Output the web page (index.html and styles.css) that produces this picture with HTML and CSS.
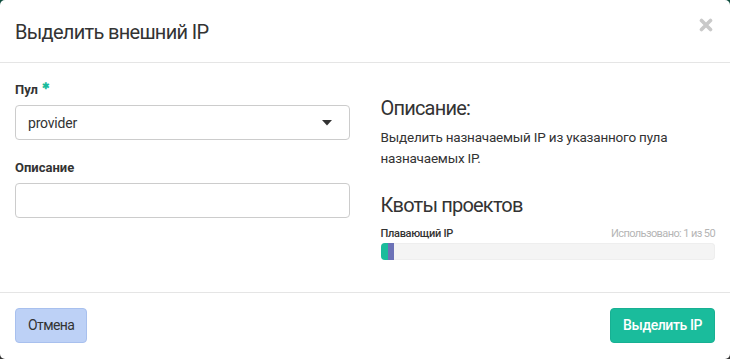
FILE: index.html
```html
<!DOCTYPE html>
<html lang="ru">
<head>
<meta charset="utf-8">
<title>Выделить внешний IP</title>
<link rel="stylesheet" href="styles.css">
</head>
<body>
<div class="modal">
  <div class="modal-header">
    <h4 class="modal-title">Выделить внешний IP</h4>
    <button class="close" type="button" aria-label="Закрыть">
      <svg width="14" height="14" viewBox="0 0 14 14"><path d="M2.5 2.5 L11.5 11.5 M11.5 2.5 L2.5 11.5" stroke="#c9c9c9" stroke-width="3.6" stroke-linecap="round"/></svg>
    </button>
  </div>
  <div class="modal-body">
    <div class="col">
      <div class="form-group">
        <label class="label">Пул <span class="req">✱</span></label>
        <div class="select">
          <span>provider</span>
          <svg class="caret" width="10" height="6" viewBox="0 0 10 6"><path d="M0 0 L10 0 L5 5.5 Z" fill="#333"/></svg>
        </div>
      </div>
      <div class="form-group">
        <label class="label">Описание</label>
        <div class="input"></div>
      </div>
    </div>
    <div class="col">
      <h3 class="heading">Описание:</h3>
      <p class="text">Выделить назначаемый IP из указанного пула назначаемых IP.</p>
      <h3 class="heading quota-title">Квоты проектов</h3>
      <div class="quota-row">
        <span class="quota-name">Плавающий IP</span>
        <span class="quota-used">Использовано: 1 из 50</span>
      </div>
      <div class="bar">
        <div class="seg seg-teal"></div>
        <div class="seg seg-purple"></div>
      </div>
    </div>
  </div>
  <div class="modal-footer">
    <button class="btn btn-cancel" type="button">Отмена</button>
    <button class="btn btn-primary" type="button">Выделить IP</button>
  </div>
</div>
</body>
</html>
```

FILE: styles.css
```css
* { box-sizing: border-box; }
html, body { margin: 0; height: 100%; }
body {
  background: linear-gradient(#0f4d3e, #333 60%);
  font-family: Roboto, "Liberation Sans", sans-serif;
  color: #333;
}
.modal {
  height: 100vh;
  background: #fff;
  border-radius: 5px;
  display: flex;
  flex-direction: column;
}
.modal-header {
  display: flex;
  justify-content: space-between;
  align-items: flex-start;
  padding: 18px 15px 16px 15px;
  border-bottom: 1px solid #e5e5e5;
}
.modal-title {
  margin: 0;
  font-size: 20px;
  font-weight: 400;
  line-height: 28px;
  letter-spacing: -0.7px;
  color: #333;
}
.close {
  border: 0;
  background: none;
  padding: 0;
  margin: 0 2px 0 0;
  width: 14px;
  height: 14px;
  display: block;
}
.close svg { display: block; }
.modal-body {
  flex: 1;
  display: grid;
  grid-template-columns: 1fr 1fr;
  column-gap: 31px;
  padding: 16px 15px 15px 15px;
  align-items: start;
}
.form-group { margin-bottom: 17px; }
.label {
  display: block;
  font-size: 13px;
  font-weight: 700;
  line-height: 21px;
  height: 21px;
  margin-bottom: 5px;
}
.req {
  color: #1abc9c;
  font-size: 9px;
  line-height: 0;
  vertical-align: 5px;
  margin-left: 1px;
}
.select, .input {
  height: 35px;
  border: 1px solid #cccccc;
  border-radius: 4px;
  background: #fff;
}
.select {
  display: flex;
  align-items: center;
  justify-content: space-between;
  padding: 0 17px 0 12px;
  font-size: 14px;
  letter-spacing: -0.2px;
}
.caret { display: block; }
.heading {
  margin: 15px 0 0 0;
  font-size: 20px;
  font-weight: 400;
  line-height: 28px;
  letter-spacing: -0.8px;
}
.text {
  margin: 5px 0 0 0;
  font-size: 13.5px;
  line-height: 21px;
  letter-spacing: -0.2px;
  padding-right: 30px;
}
.quota-title { margin-top: 22px; }
.quota-row {
  display: flex;
  justify-content: space-between;
  margin-top: 7px;
  font-size: 11px;
  line-height: 15px;
}
.quota-name { font-weight: 500; color: #333; letter-spacing: -0.3px; }
.quota-used { color: #b5b5b5; letter-spacing: -0.6px; }
.bar {
  margin-top: 2px;
  height: 17px;
  background: #f4f4f4;
  border-radius: 4px;
  display: flex;
  overflow: hidden;
  box-shadow: inset 0 0 0 1px #eeeeee;
}
.seg { height: 100%; }
.seg-teal { width: 7px; background: #1abc9c; }
.seg-purple { width: 6px; background: #6c72b7; }
.modal-footer {
  display: flex;
  justify-content: space-between;
  padding: 15px 15px 16px 15px;
  border-top: 1px solid #e5e5e5;
}
.btn {
  height: 35px;
  padding: 0 12px;
  border-radius: 4px;
  font-family: Roboto, "Liberation Sans", sans-serif;
  font-size: 14px;
  line-height: 33px;
}
.btn-cancel {
  background: #bdd1f6;
  border: 1px solid #a8c0ee;
  color: #333;
  letter-spacing: -0.6px;
}
.btn-primary {
  background: #1abc9c;
  border: 1px solid #18b093;
  color: #fff;
  font-weight: 500;
  letter-spacing: -0.4px;
}
```
